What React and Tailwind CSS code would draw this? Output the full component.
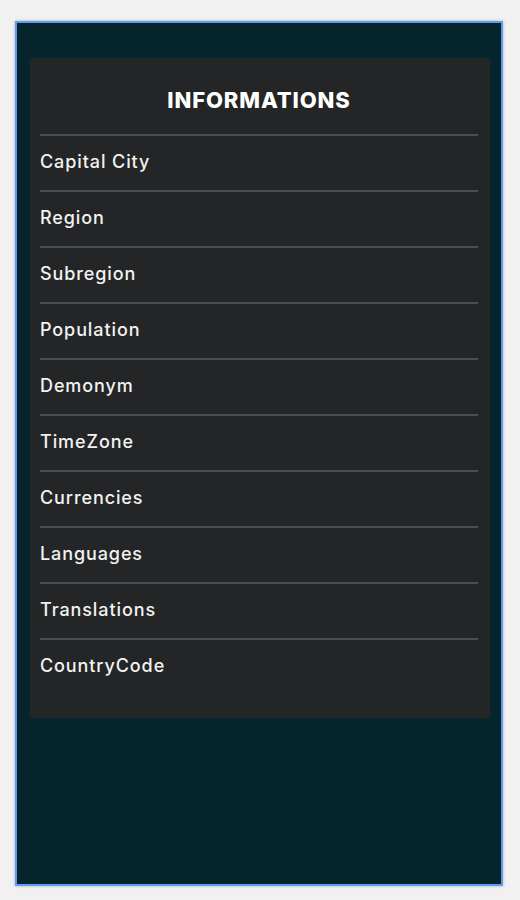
const items = [
  "Capital City",
  "Region",
  "Subregion",
  "Population",
  "Demonym",
  "TimeZone",
  "Currencies",
  "Languages",
  "Translations",
  "CountryCode",
];

export default function App() {
  return (
    <div className="w-[520px] h-[900px] bg-[#f1f1f1] pt-[21px] pl-[15px] font-['Inter',sans-serif]">
      <div className="w-[488px] h-[865px] border-2 border-[#5d9cf2] bg-[#06242c] px-[13px] pt-[35px] shadow-[0_0_3px_rgba(0,0,0,0.25)]">
        <div className="w-[460px] h-[660px] bg-[#232526] pl-[10px] pr-[12px]">
          <h2 className="h-[76px] pt-[8px] flex items-center justify-center text-white text-[22px] font-extrabold tracking-[0.04em]">
            INFORMATIONS
          </h2>
          {items.map((item) => (
            <div
              key={item}
              className="h-[56px] border-t-2 border-[#4a4c4d] flex items-center pb-[3px] text-[#f2f2f2] text-[18px] font-medium tracking-[0.05em]"
            >
              {item}
            </div>
          ))}
        </div>
      </div>
    </div>
  );
}
